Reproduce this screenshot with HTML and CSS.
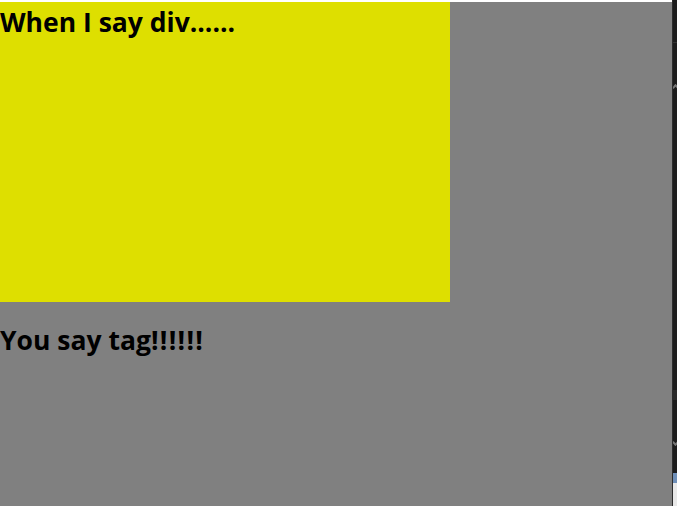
FILE: index.html
```html
<!DOCTYPE html>
<html>
<head>
<meta charset="utf-8">
<link rel="stylesheet" href="styles.css">
</head>
<body>
<div class="frame">
  <main class="page">
    <div class="box">
      <h2 class="title">When I say div......</h2>
    </div>
    <h2 class="reply">You say tag<span class="bang">!!!!!!</span></h2>
  </main>
  <aside class="scrollbar">
    <div class="sb-top"></div>
    <div class="sb-arrow up"></div>
    <div class="sb-track"></div>
    <div class="sb-mid"></div>
    <div class="sb-arrow down"></div>
    <div class="sb-pad"></div>
    <div class="sb-blue"></div>
    <div class="sb-white"></div>
  </aside>
</div>
</body>
</html>
```
FILE: styles.css
```css
html, body {
  margin: 0;
  padding: 0;
  background: #ffffff;
  width: 677px;
  height: 506px;
  overflow: hidden;
}
.frame {
  display: flex;
  height: 506px;
}
.page {
  width: 672px;
  margin-top: 2px;
  height: 504px;
  background: #808080;
  font-family: "Open Sans", "Noto Sans", sans-serif;
  color: #000;
}
.box {
  width: 450px;
  height: 300px;
  background: #dedf00;
  padding-top: 2px;
  box-sizing: border-box;
}
.title {
  margin: 0;
  font-size: 26.5px;
  font-weight: 700;
  line-height: 36px;
}
.reply {
  margin: 20px 0 0 0;
  font-size: 26.5px;
  font-weight: 700;
  line-height: 36px;
}
.bang {
  letter-spacing: 1.3px;
}
.scrollbar {
  width: 5px;
  height: 506px;
  background: #1c1c1c;
  border-left: 1px solid #2c2c2c;
  box-sizing: border-box;
  display: flex;
  flex-direction: column;
  overflow: hidden;
}
.sb-top {
  height: 42px;
  border-bottom: 1px solid #333;
}
.sb-arrow {
  width: 5px;
  height: 5px;
  box-sizing: border-box;
  border-left: 2px solid #777;
  border-top: 2px solid #777;
  transform: rotate(45deg);
}
.sb-arrow.up {
  margin-top: 42px;
}
.sb-track {
  height: 300px;
}
.sb-mid {
  height: 10px;
  background: #2a2a2a;
}
.sb-arrow.down {
  margin-top: 40px;
  transform: rotate(225deg);
}
.sb-pad {
  height: 28px;
}
.sb-blue {
  height: 10px;
  background: #6f8fb8;
}
.sb-white {
  flex: 1;
  background: #e8e8e8;
}
```
